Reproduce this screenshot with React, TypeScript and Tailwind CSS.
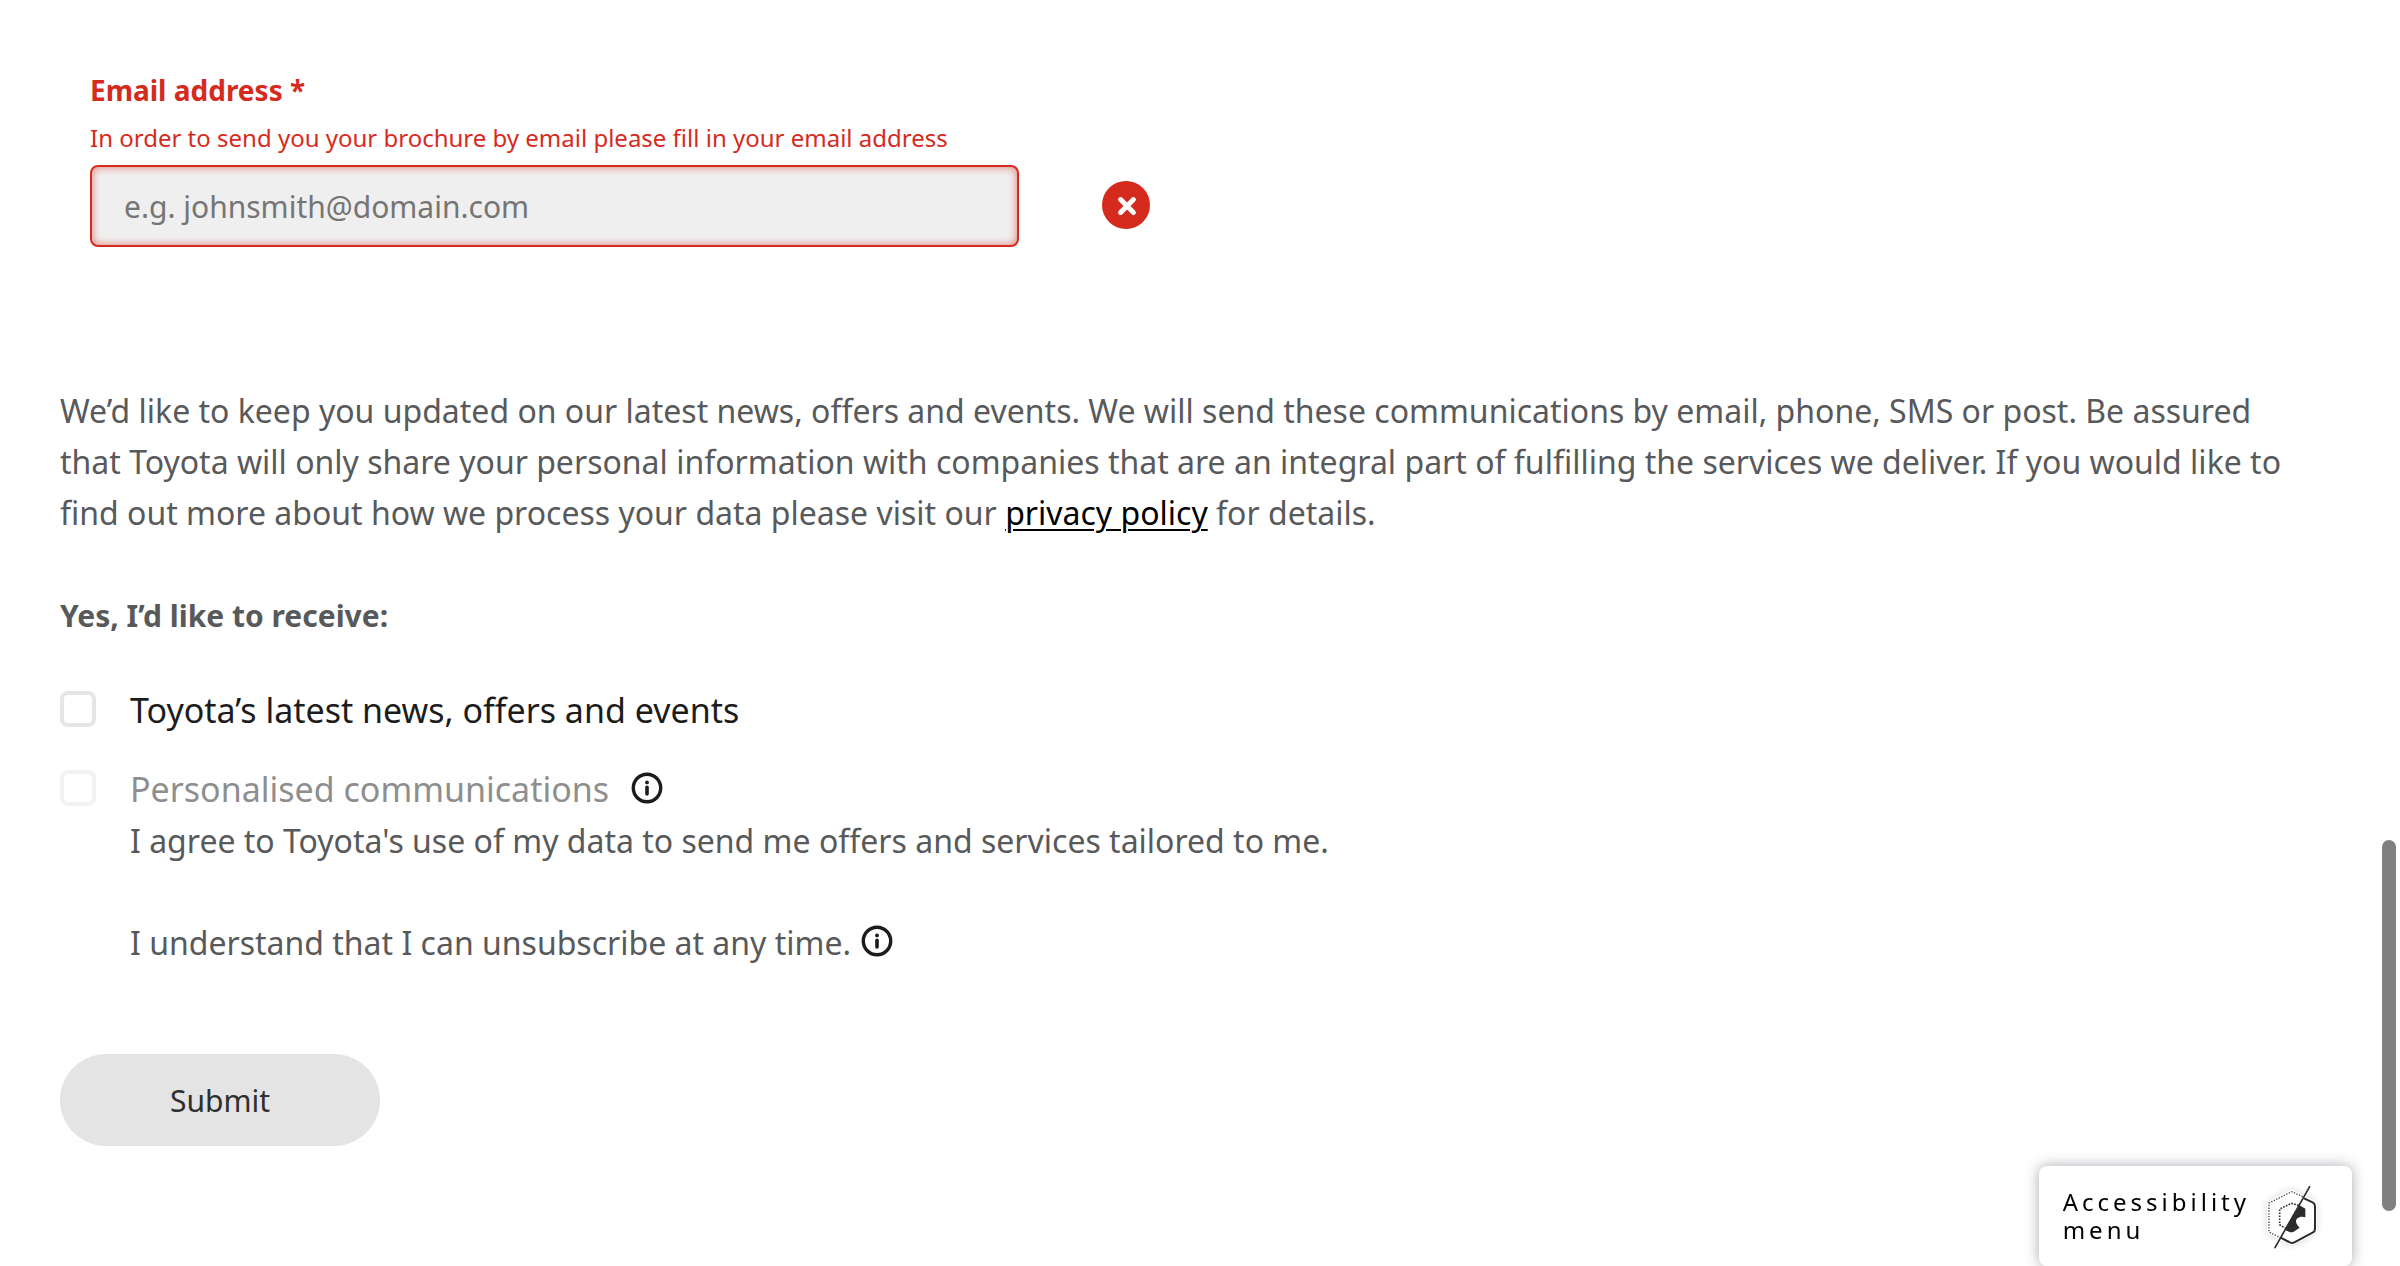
function InfoIcon() {
  return (
    <svg className="size-8" viewBox="0 0 32 32" fill="none" aria-hidden="true">
      <circle cx="16" cy="16" r="13.7" stroke="#1c1c1c" strokeWidth="3.4" />
      <circle cx="16" cy="10.4" r="1.9" fill="#1c1c1c" />
      <path d="M16 15.2V22" stroke="#1c1c1c" strokeWidth="3.6" strokeLinecap="round" />
    </svg>
  );
}

function InfoButton({ label }: { label: string }) {
  return (
    <button type="button" aria-label={label} className="shrink-0 pb-1">
      <InfoIcon />
    </button>
  );
}

function ErrorIcon() {
  return (
    <svg className="mb-0.5 size-12 shrink-0" viewBox="0 0 48 48" role="img" aria-label="Invalid">
      <circle cx="24" cy="24" r="24" fill="#d52b1e" />
      <path d="M18.6 18.6L31.4 31.4M31.4 18.6L18.6 31.4" stroke="#fff" strokeWidth="5" strokeLinecap="round" />
    </svg>
  );
}

function AccessibilityLogo() {
  return (
    <svg className="size-[90px] shrink-0" viewBox="0 0 270 270" fill="none" aria-hidden="true">
      <defs>
        <filter id="glow" x="-40%" y="-40%" width="180%" height="180%">
          <feGaussianBlur stdDeviation="13" />
        </filter>
      </defs>
      <path d="M125 58L197 95V184L125 222L53 184V95Z" fill="#000" opacity="0.2" filter="url(#glow)" />
      <path d="M125 61L195 96V182L125 217L57 183V96Z" fill="#fff" stroke="#fff" strokeWidth="12" strokeLinejoin="round" />
      <path d="M179 47L75 230" stroke="#fff" strokeWidth="10" strokeLinecap="round" />
      <path d="M158 77L125 62L57 96V183L90 199" stroke="#444" strokeWidth="4" strokeDasharray="4 4.4" />
      <path d="M146 103L124 97L89 114V161L105 171" stroke="#333" strokeWidth="5" strokeDasharray="5 4" />
      <path d="M162 82L188 94Q195 98 195 105V174Q195 181 189 184L133 214Q125 218 117 213L92 200" stroke="#2b2c2e" strokeWidth="6" strokeLinejoin="round" />
      <path d="M149 103L166 113V139C158 136 149 136 142 142C135 149 137 158 149 170L131 182Q124 186 117 182L105 177Z" fill="#2b2c2e" />
      <path d="M179 47L75 230" stroke="#2b2c2e" strokeWidth="5" strokeLinecap="round" />
    </svg>
  );
}

const checkboxClass =
  'mb-1 size-9 shrink-0 appearance-none rounded-lg border-4 border-[#e6e6e6] bg-white checked:bg-[#1c1c1c] disabled:opacity-50';

export default function App() {
  return (
    <div className="min-h-screen bg-white font-['Noto_Sans',sans-serif] text-[#58595b]">
      <form className="flex flex-col pt-[66px] pr-[100px] pb-[120px] pl-[60px]" noValidate>
        <div className="flex flex-col pl-[30px] text-[#d52b1e]">
          <label htmlFor="email" className="text-[28px] leading-[48px] font-bold">
            Email address *
          </label>
          <p id="email-error" className="mt-1.5 text-2xl leading-9">
            In order to send you your brochure by email please fill in your email address
          </p>
          <div className="mt-[9px] flex items-center gap-[83px]">
            <input
              id="email"
              type="email"
              aria-invalid="true"
              aria-describedby="email-error"
              placeholder="e.g. johnsmith@domain.com"
              className="h-[82px] w-full max-w-[929px] rounded-lg border-2 border-[#d52b1e] bg-[#efefef] px-8 text-[30px] text-[#1c1c1c] shadow-[inset_0_0_8px_#d52b1e99] outline-none placeholder:text-[#757575]"
            />
            <ErrorIcon />
          </div>
        </div>

        <p className="mt-[138px] text-[32px] leading-[51px]">
          We’d like to keep you updated on our latest news, offers and events. We will send these communications by
          email, phone, SMS or post. Be assured that Toyota will only share your personal information with companies
          that are an integral part of fulfilling the services we deliver. If you would like to find out more about how
          we process your data please visit our{' '}
          <a href="#privacy" className="text-black underline decoration-2 underline-offset-4">
            privacy policy
          </a>{' '}
          for details.
        </p>

        <fieldset className="mt-[52px]">
          <legend className="text-[30px] leading-[51px] font-bold">Yes, I’d like to receive:</legend>
          <div className="mt-11 flex items-center gap-[34px]">
            <input id="news" type="checkbox" className={checkboxClass} />
            <label htmlFor="news" className="text-[34px] leading-[51px] text-[#1c1c1c]">
              Toyota’s latest news, offers and events
            </label>
          </div>
          <div className="mt-7 flex items-center gap-[34px]">
            <input id="personalised" type="checkbox" disabled className={checkboxClass} />
            <div className="flex items-center gap-[22px]">
              <label htmlFor="personalised" className="text-[34px] leading-[51px] text-[#8e8e8e]">
                Personalised communications
              </label>
              <InfoButton label="About personalised communications" />
            </div>
          </div>
          <div className="flex flex-col gap-[51px] pl-[70px] text-[32px] leading-[51px]">
            <p>I agree to Toyota's use of my data to send me offers and services tailored to me.</p>
            <div className="flex items-center gap-2.5">
              <p>I understand that I can unsubscribe at any time.</p>
              <InfoButton label="About unsubscribing" />
            </div>
          </div>
        </fieldset>

        <button
          type="submit"
          className="mt-[86px] h-[92px] w-80 rounded-full bg-[#e4e4e4] text-[30px] text-[#2f2f2f]"
        >
          Submit
        </button>
      </form>

      <button
        type="button"
        className="fixed right-12 bottom-0 flex h-[100px] items-center rounded-lg bg-white pr-3 pl-6 text-left text-2xl leading-7 tracking-[4px] text-black shadow-[0_0_14px_rgba(40,40,60,0.4)]"
      >
        <span>
          <span className="block">Accessibility</span>
          <span className="block">menu</span>
        </span>
        <AccessibilityLogo />
      </button>

      <div className="fixed top-[840px] right-1 h-[371px] w-3.5 rounded-full bg-[#808080]" />
    </div>
  );
}
